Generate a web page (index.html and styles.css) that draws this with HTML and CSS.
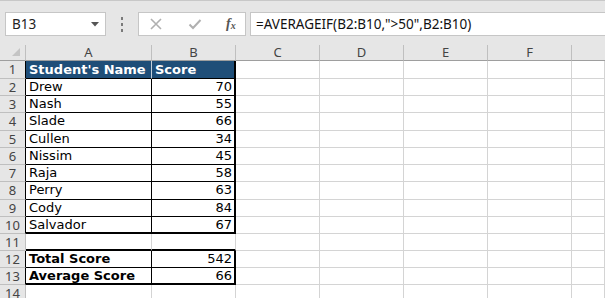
FILE: index.html
```html
<!DOCTYPE html>
<html>
<head>
<meta charset="utf-8">
<link rel="stylesheet" href="styles.css">
</head>
<body>
<div class="app">
  <div class="toolbar">
    <div class="namebox">
      <span class="ref">B13</span>
      <svg class="caret" width="8" height="5" viewBox="0 0 8 5"><path d="M0 0H8L4 4.5Z" fill="#555"/></svg>
    </div>
    <div class="dots"><i></i><i></i><i></i></div>
    <div class="fxbtns">
      <svg width="14" height="14" viewBox="0 0 14 14"><path d="M2 2L12 12M12 2L2 12" stroke="#b0b0b0" stroke-width="1.6" fill="none"/></svg>
      <svg width="14" height="14" viewBox="0 0 14 14"><path d="M1.5 7.5L5 11L12.5 3" stroke="#b0b0b0" stroke-width="2" fill="none"/></svg>
      <span class="fx">f<sub>x</sub></span>
    </div>
    <div class="formula">=AVERAGEIF(B2:B10,"&gt;50",B2:B10)</div>
  </div>
  <div class="sheet">
    <div class="ch corner"><svg width="8" height="8" viewBox="0 0 8 8"><path d="M8 0V8H0Z" fill="#c4c4c4"/></svg></div>
    <div class="ch">A</div><div class="ch">B</div><div class="ch">C</div><div class="ch">D</div><div class="ch">E</div><div class="ch">F</div><div class="ch last"></div>

    <div class="rh tb">1</div><div class="c hd a1">Student's Name</div><div class="c hd b1">Score</div><div class="c"></div><div class="c"></div><div class="c"></div><div class="c"></div><div class="c"></div>
    <div class="rh tb">2</div><div class="c ta">Drew</div><div class="c tb2 n">70</div><div class="c"></div><div class="c"></div><div class="c"></div><div class="c"></div><div class="c"></div>
    <div class="rh tb">3</div><div class="c ta">Nash</div><div class="c tb2 n">55</div><div class="c"></div><div class="c"></div><div class="c"></div><div class="c"></div><div class="c"></div>
    <div class="rh tb">4</div><div class="c ta">Slade</div><div class="c tb2 n">66</div><div class="c"></div><div class="c"></div><div class="c"></div><div class="c"></div><div class="c"></div>
    <div class="rh tb">5</div><div class="c ta">Cullen</div><div class="c tb2 n">34</div><div class="c"></div><div class="c"></div><div class="c"></div><div class="c"></div><div class="c"></div>
    <div class="rh tb">6</div><div class="c ta">Nissim</div><div class="c tb2 n">45</div><div class="c"></div><div class="c"></div><div class="c"></div><div class="c"></div><div class="c"></div>
    <div class="rh tb">7</div><div class="c ta">Raja</div><div class="c tb2 n">58</div><div class="c"></div><div class="c"></div><div class="c"></div><div class="c"></div><div class="c"></div>
    <div class="rh tb">8</div><div class="c ta">Perry</div><div class="c tb2 n">63</div><div class="c"></div><div class="c"></div><div class="c"></div><div class="c"></div><div class="c"></div>
    <div class="rh tb">9</div><div class="c ta">Cody</div><div class="c tb2 n">84</div><div class="c"></div><div class="c"></div><div class="c"></div><div class="c"></div><div class="c"></div>
    <div class="rh tb">10</div><div class="c ta bot">Salvador</div><div class="c tb2 n bot">67</div><div class="c"></div><div class="c"></div><div class="c"></div><div class="c"></div><div class="c"></div>
    <div class="rh">11</div><div class="c bot"></div><div class="c bot"></div><div class="c"></div><div class="c"></div><div class="c"></div><div class="c"></div><div class="c"></div>
    <div class="rh tb">12</div><div class="c ta b">Total Score</div><div class="c tb2 n">542</div><div class="c"></div><div class="c"></div><div class="c"></div><div class="c"></div><div class="c"></div>
    <div class="rh tb">13</div><div class="c ta b bot">Average Score</div><div class="c tb2 n bot">66</div><div class="c"></div><div class="c"></div><div class="c"></div><div class="c"></div><div class="c"></div>
    <div class="rh">14</div><div class="c"></div><div class="c"></div><div class="c"></div><div class="c"></div><div class="c"></div><div class="c"></div><div class="c"></div>
  </div>
</div>
</body>
</html>
```
FILE: styles.css
```css
* { box-sizing: border-box; }
html, body { margin: 0; padding: 0; }
body {
  width: 605px;
  height: 298px;
  overflow: hidden;
  background: #fff;
  font-family: "Noto Sans", sans-serif;
}
.app { width: 605px; }
.toolbar {
  height: 45px;
  background: #e6e6e6;
  border-top: 1px solid #c8c8c8;
  padding-top: 11px;
  display: flex;
  align-items: flex-start;
}
.namebox {
  margin-left: 5px;
  width: 101px;
  height: 24px;
  background: #fff;
  border: 1px solid #c6c6c6;
  display: flex;
  align-items: center;
  padding-left: 6px;
  padding-right: 6px;
  font-size: 13.5px;
  color: #222;
}
.namebox .ref { flex: 1; }
.caret { margin-top: 1px; }
.dots {
  width: 32px;
  height: 24px;
  display: flex;
  flex-direction: column;
  align-items: center;
  justify-content: center;
  gap: 3px;
}
.dots i { display: block; width: 2px; height: 3px; background: #7a7a7a; }
.fxbtns {
  width: 108px;
  height: 24px;
  background: #fff;
  border: 1px solid #c6c6c6;
  display: flex;
  align-items: center;
  padding-left: 10px;
  gap: 25px;
}
.fx {
  font-family: "Liberation Serif", serif;
  font-style: italic;
  font-weight: bold;
  font-size: 14px;
  color: #555;
  margin-left: -1px;
}
.fx sub { font-size: 10px; vertical-align: -1px; }
.formula {
  margin-left: 4px;
  flex: 1;
  height: 24px;
  background: #fff;
  border: 1px solid #c6c6c6;
  border-right: none;
  padding-left: 5px;
  font-size: 13.5px;
  line-height: 22px;
  color: #111;
  white-space: nowrap;
}
.sheet {
  display: grid;
  grid-template-columns: 26px 126px 84px 84px 84px 84px 84px 1fr;
  grid-template-rows: 16px 18px 17px 17px 18px 17px 17px 17px 18px 17px 17px 17px 17px 17px 17px;
  background: #fff;
}
.ch {
  background: #e6e6e6;
  border-right: 1px solid #bfbfbf;
  border-bottom: 1px solid #9e9e9e;
  font-size: 13px;
  color: #444;
  text-align: center;
  line-height: 15px;
}
.ch.corner {
  display: flex;
  align-items: flex-end;
  justify-content: flex-end;
  padding: 0 5px 4px 0;
}
.ch.last { border-right: none; }
.rh {
  background: #e6e6e6;
  border-right: 1px solid #bfbfbf;
  border-bottom: 1px solid #bfbfbf;
  font-size: 13px;
  color: #444;
  text-align: center;
  line-height: 16px;
}
.rh.tb { border-right-color: #000; }
.c {
  border-right: 1px solid #d4d4d4;
  border-bottom: 1px solid #d4d4d4;
  font-family: "DejaVu Sans", sans-serif;
  font-size: 13px;
  line-height: 16px;
  color: #000;
  white-space: nowrap;
  overflow: hidden;
  padding: 0 3px;
}
.c.hd {
  background: #1f4e78;
  color: #fff;
  font-weight: bold;
  border-bottom: 1px solid #000;
  line-height: 17px;
}
.c.a1 { border-right-color: #c5d0db; }
.c.b1 { border-right: 2px solid #000; }
.c.ta { border-right-color: #000; border-bottom-color: #000; }
.c.tb2 { border-right: 2px solid #000; border-bottom-color: #000; }
.c.n { text-align: right; padding-right: 2px; }
.c.b { font-weight: bold; }
.c.bot { border-bottom: 2px solid #000; }
```
